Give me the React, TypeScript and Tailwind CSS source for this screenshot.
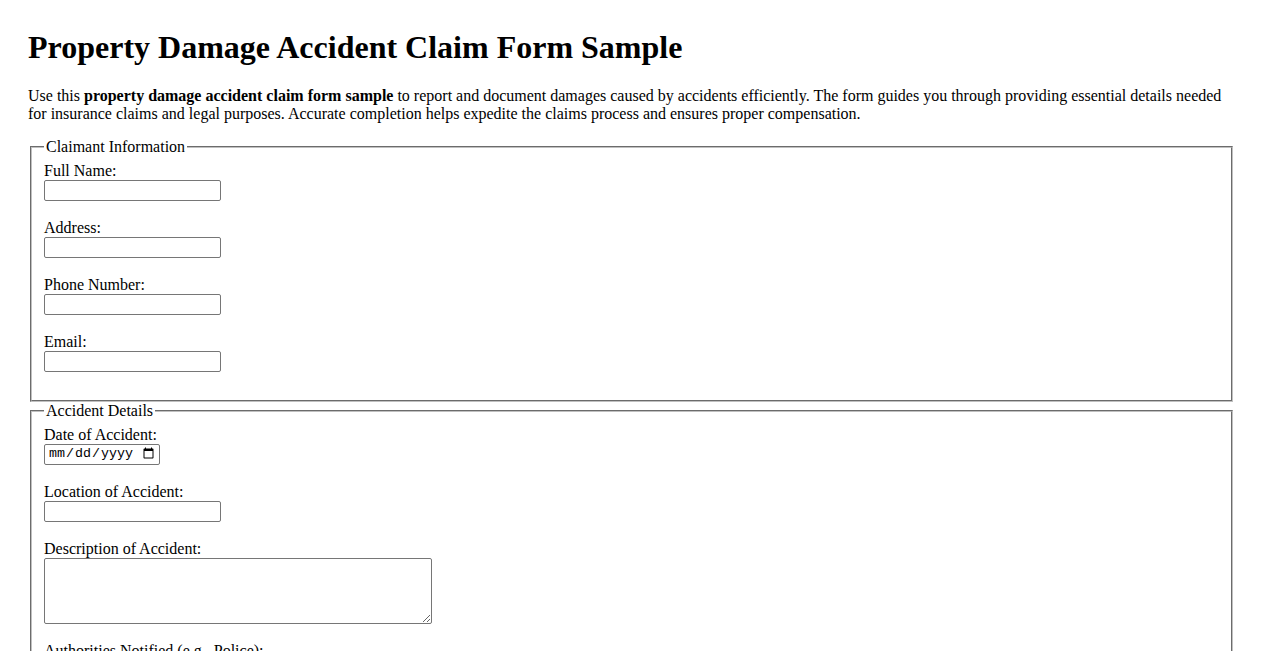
import React from "react";

const serif = { fontFamily: '"Liberation Serif", "Times New Roman", serif' };

function TextField({ label, type = "text" }: { label: string; type?: string }) {
  return (
    <div className="mb-[18px]">
      <label className="block leading-[18px]">{label}</label>
      <input
        type={type}
        className="block w-[177px] h-[21px] border border-[#767676] rounded-[2px] bg-white px-[2px] py-[1px] text-[13.33px] font-['Liberation_Sans',Arial,sans-serif]"
      />
    </div>
  );
}

export default function App() {
  return (
    <div className="bg-white text-black px-[28px] pt-[8px] pb-[8px] text-[16px]" style={serif}>
      <h1 className="text-[32px] font-bold leading-[36.5px] mt-[21px] mb-[21px]">
        Property Damage Accident Claim Form Sample
      </h1>
      <p className="leading-[18px] mt-[16px] mb-[15px]">
        Use this <strong className="font-bold">property damage accident claim form sample</strong> to report and
        document damages caused by accidents efficiently. The form guides you through providing essential details
        needed for insurance claims and legal purposes. Accurate completion helps expedite the claims process and
        ensures proper compensation.
      </p>
      <form>
        <fieldset className="mx-[2px] border-2 [border-style:groove] border-[rgb(192,192,192)] pt-[6px] px-[12px] pb-[10px]">
          <legend className="px-[2px] leading-[18px]">Claimant Information</legend>
          <TextField label="Full Name:" />
          <TextField label="Address:" />
          <TextField label="Phone Number:" type="tel" />
          <TextField label="Email:" type="email" />
        </fieldset>
        <fieldset className="mx-[2px] border-2 [border-style:groove] border-[rgb(192,192,192)] pt-[6px] px-[12px] pb-[10px]">
          <legend className="px-[2px] leading-[18px]">Accident Details</legend>
          <div className="mb-[18px]">
            <label className="block leading-[18px]">Date of Accident:</label>
            <input
              type="date"
              className="block w-[116px] h-[21px] border border-[#767676] rounded-[2px] bg-white pl-[3px] pr-[2px] text-[13.33px] font-['Liberation_Mono',monospace]"
            />
          </div>
          <TextField label="Location of Accident:" />
          <div className="mb-[18px]">
            <label className="block leading-[18px]">Description of Accident:</label>
            <textarea className="block w-[388px] h-[66px] border border-[#767676] rounded-[2px] bg-white p-[2px] text-[13.33px] font-['Liberation_Mono',monospace]" />
          </div>
          <TextField label="Authorities Notified (e.g., Police):" />
          <TextField label="Report Number:" />
        </fieldset>
      </form>
    </div>
  );
}
